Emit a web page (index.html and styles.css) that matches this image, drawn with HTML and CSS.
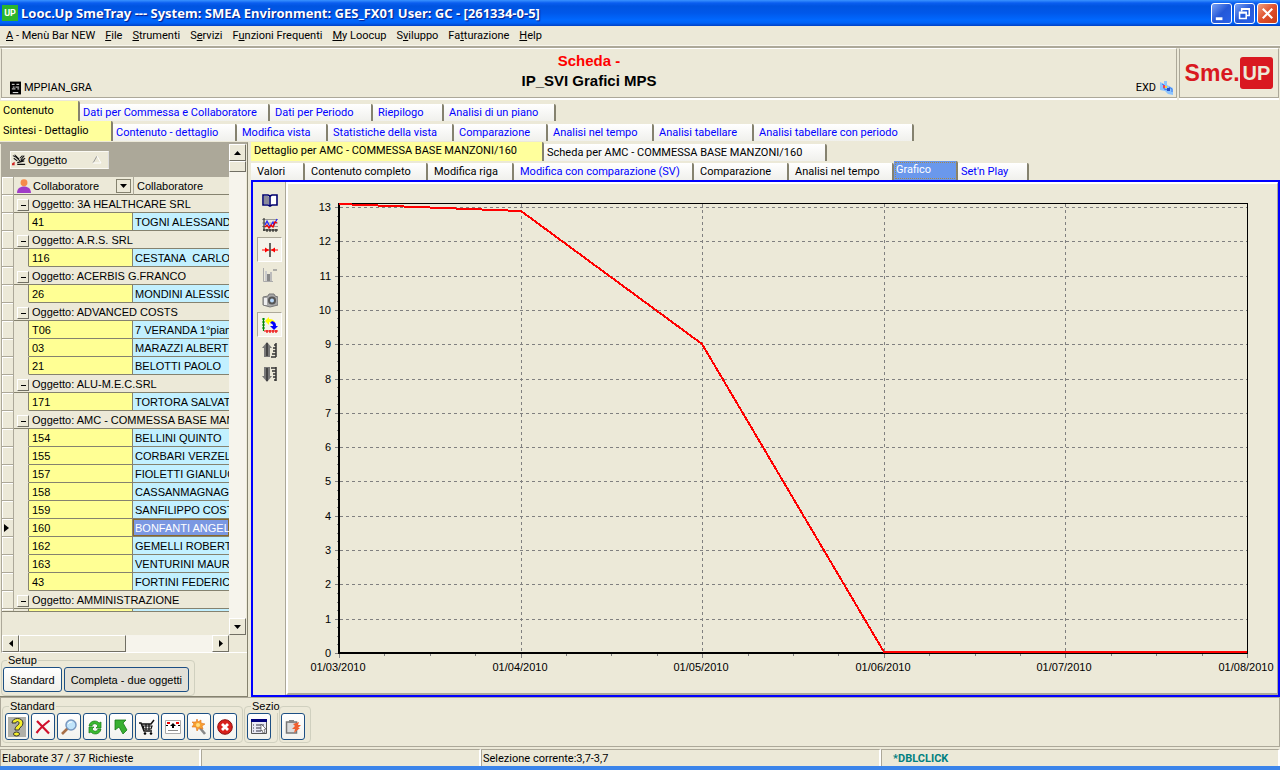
FILE: index.html
```html
<!DOCTYPE html>
<html lang="it">
<head>
<meta charset="utf-8">
<title>Looc.Up SmeTray</title>
<link rel="stylesheet" href="styles.css">
</head>
<body>
<div class="app">
  <header class="titlebar">
    <span class="app-icon">UP</span>
    <h1 class="title">Looc.Up SmeTray --- System: SMEA Environment: GES_FX01 User: GC - [261334-0-5]</h1>
    <div class="window-buttons">
      <button class="win" aria-label="Riduci a icona"><svg viewBox="0 0 20 20"><path d="M4 14h7v3H4z" fill="#fff"/></svg></button>
      <button class="win" aria-label="Ripristina"><svg viewBox="0 0 20 20"><path d="M7 8V5h8v7h-3M7 5.5h8" fill="none" stroke="#fff" stroke-width="1.6"/><path d="M4.8 8.8h7v6.4h-7zM4.8 9.5h7" fill="none" stroke="#fff" stroke-width="1.6"/></svg></button>
      <button class="win win-close" aria-label="Chiudi"><svg viewBox="0 0 20 20"><path d="M5 5l10 10M15 5L5 15" stroke="#fff" stroke-width="2.2"/></svg></button>
    </div>
  </header>

  <nav class="menubar" aria-label="Menù">
    <button><u>A</u> - Menù Bar NEW</button>
    <button><u>F</u>ile</button>
    <button><u>S</u>trumenti</button>
    <button>S<u>e</u>rvizi</button>
    <button>F<u>u</u>nzioni Frequenti</button>
    <button><u>M</u>y Loocup</button>
    <button>S<u>v</u>iluppo</button>
    <button>Fa<u>t</u>turazione</button>
    <button><u>H</u>elp</button>
  </nav>

  <section class="banner">
    <div class="banner-main">
      <div class="program"><svg class="ico12" viewBox="0 0 12 14"><path d="M0 0h12v14H0z"/><path d="M2 3h3M7 3h3M3 6h2M6 6h4M2 8h4M8 8h2M3 12h6" stroke="#fff"/></svg>MPPIAN_GRA</div>
      <div class="banner-title"><p class="kind">Scheda -</p><p>IP_SVI Grafici MPS</p></div>
      <div class="mode">EXD
        <svg class="ico14" viewBox="0 0 14 14"><path d="M0 1l4 2V0h3v4l6 3v7l-5-1-3-3-5-1z" fill="#8cc4ff"/><path d="M2 3l2 1v4l4 1M9 6l3 2v3" stroke="#3a78e8" fill="none"/><path d="M3 4h2v3H3z" fill="#e84060"/><path d="M5 5h2v2H5z" fill="#fc3"/><path d="M7 7h3v3H7z" fill="#2450c8"/></svg>
      </div>
    </div>
    <div class="banner-logo"><div class="logo"><span>Sme.</span><span class="logo-up">UP</span></div></div>
  </section>

  <div class="tabs tabs-one" role="tablist">
    <button role="tab" aria-selected="true" class="tab current">Contenuto</button>
    <button role="tab" class="tab">Dati per Commessa e Collaboratore</button>
    <button role="tab" class="tab">Dati per Periodo</button>
    <button role="tab" class="tab">Riepilogo</button>
    <button role="tab" class="tab">Analisi di un piano</button>
  </div>
  <div class="tabs tabs-two" role="tablist">
    <button role="tab" aria-selected="true" class="tab current">Sintesi - Dettaglio</button>
    <button role="tab" class="tab">Contenuto - dettaglio</button>
    <button role="tab" class="tab">Modifica vista</button>
    <button role="tab" class="tab">Statistiche della vista</button>
    <button role="tab" class="tab">Comparazione</button>
    <button role="tab" class="tab">Analisi nel tempo</button>
    <button role="tab" class="tab">Analisi tabellare</button>
    <button role="tab" class="tab">Analisi tabellare con periodo</button>
  </div>

  <main class="work">
    <aside class="side">
      <div class="browser">
        <div class="listing">
          <div class="groupbox">
            <button class="group-by">
              <svg class="ico14" viewBox="0 0 16 14"><path d="M1 2l4 2 4 4M2 5l4 3M3 1l5 5M9 5l3-3M10 7l4-5M6 10l8-2M6 12h9M9 9l6-4" stroke="#111" fill="none" stroke-width="1.2"/><path d="M0 11l3-2v4H0z" fill="#c22"/></svg>
              <span>Oggetto</span>
              <svg class="sort" viewBox="0 0 10 10"><path d="M1 8l4-7" stroke="#999"/><path d="M5 1l4 7H1" stroke="#fff" fill="none"/></svg>
            </button>
          </div>
          <table class="grid">
            <colgroup><col class="c-mark"><col class="c-indent"><col class="c-code"><col class="c-name"></colgroup>
            <thead>
              <tr>
                <th class="mark"></th>
                <th class="head-code" colspan="2"><div class="head"><svg class="ico14" viewBox="0 0 13 13"><circle cx="6.5" cy="3.5" r="3.2" fill="#f58a4a"/><path d="M0 13c0-5 4-6 6.500-6s6.500 1 6.500 6z" fill="#a03cc8"/></svg><span>Collaboratore</span><button class="drop" aria-label="Filtra"><svg viewBox="0 0 7 4"><path d="M0 0h7L3.500 4z"/></svg></button></div></th>
                <th class="head-name">Collaboratore</th>
              </tr>
            </thead>
            <tbody>
              <tr class="group"><td class="mark"></td><td colspan="3"><button class="fold" aria-label="Comprimi"></button>Oggetto: 3A HEALTHCARE SRL</td></tr>
              <tr><td class="mark"></td><td class="indent"></td><td class="code">41</td><td class="name">TOGNI ALESSAND</td></tr>
              <tr class="group"><td class="mark"></td><td colspan="3"><button class="fold" aria-label="Comprimi"></button>Oggetto: A.R.S. SRL</td></tr>
              <tr><td class="mark"></td><td class="indent"></td><td class="code">116</td><td class="name">CESTANA&nbsp; CARLO</td></tr>
              <tr class="group"><td class="mark"></td><td colspan="3"><button class="fold" aria-label="Comprimi"></button>Oggetto: ACERBIS G.FRANCO</td></tr>
              <tr><td class="mark"></td><td class="indent"></td><td class="code">26</td><td class="name">MONDINI ALESSIO</td></tr>
              <tr class="group"><td class="mark"></td><td colspan="3"><button class="fold" aria-label="Comprimi"></button>Oggetto: ADVANCED COSTS</td></tr>
              <tr><td class="mark"></td><td class="indent"></td><td class="code">T06</td><td class="name">7 VERANDA 1°pian</td></tr>
              <tr><td class="mark"></td><td class="indent"></td><td class="code">03</td><td class="name">MARAZZI ALBERT</td></tr>
              <tr><td class="mark"></td><td class="indent"></td><td class="code">21</td><td class="name">BELOTTI PAOLO</td></tr>
              <tr class="group"><td class="mark"></td><td colspan="3"><button class="fold" aria-label="Comprimi"></button>Oggetto: ALU-M.E.C.SRL</td></tr>
              <tr><td class="mark"></td><td class="indent"></td><td class="code">171</td><td class="name">TORTORA SALVAT</td></tr>
              <tr class="group"><td class="mark"></td><td colspan="3"><button class="fold" aria-label="Comprimi"></button>Oggetto: AMC - COMMESSA BASE MANZ</td></tr>
              <tr><td class="mark"></td><td class="indent"></td><td class="code">154</td><td class="name">BELLINI QUINTO</td></tr>
              <tr><td class="mark"></td><td class="indent"></td><td class="code">155</td><td class="name">CORBARI VERZEL</td></tr>
              <tr><td class="mark"></td><td class="indent"></td><td class="code">157</td><td class="name">FIOLETTI GIANLUC</td></tr>
              <tr><td class="mark"></td><td class="indent"></td><td class="code">158</td><td class="name">CASSANMAGNAG</td></tr>
              <tr><td class="mark"></td><td class="indent"></td><td class="code">159</td><td class="name">SANFILIPPO COST</td></tr>
              <tr><td class="mark"><svg class="pointer" viewBox="0 0 5 8"><path d="M0 0l5 4-5 4z"/></svg></td><td class="indent"></td><td class="code">160</td><td class="name picked">BONFANTI ANGEL</td></tr>
              <tr><td class="mark"></td><td class="indent"></td><td class="code">162</td><td class="name">GEMELLI ROBERT</td></tr>
              <tr><td class="mark"></td><td class="indent"></td><td class="code">163</td><td class="name">VENTURINI MAUR</td></tr>
              <tr><td class="mark"></td><td class="indent"></td><td class="code">43</td><td class="name">FORTINI FEDERIC</td></tr>
              <tr class="group"><td class="mark"></td><td colspan="3"><button class="fold" aria-label="Comprimi"></button>Oggetto: AMMINISTRAZIONE</td></tr>
              <tr class="sliver"><td class="mark"></td><td class="indent"></td><td class="code"></td><td class="name"></td></tr>
            </tbody>
          </table>
          <div class="grid-foot"></div>
        </div>
        <div class="vscroll">
          <button class="arrow" aria-label="Su"><svg viewBox="0 0 7 4"><path d="M0 4h7L3.500 0z"/></svg></button>
          <div class="vthumb"></div>
          <button class="arrow arrow-end" aria-label="Giù"><svg viewBox="0 0 7 4"><path d="M0 0h7L3.500 4z"/></svg></button>
        </div>
        <div class="hscroll">
          <button class="arrow" aria-label="Sinistra"><svg class="turned" viewBox="0 0 4 7"><path d="M4 0v7L0 3.500z"/></svg></button>
          <div class="hthumb"></div>
          <button class="arrow arrow-right" aria-label="Destra"><svg class="turned" viewBox="0 0 4 7"><path d="M0 0v7l4-3.500z"/></svg></button>
        </div>
      </div>
      <fieldset class="setup"><legend>Setup</legend><button class="push">Standard</button><button class="push pressed">Completa - due oggetti</button></fieldset>
    </aside>

    <section class="detail">
      <div class="tabs tabs-three" role="tablist">
        <button role="tab" aria-selected="true" class="tab current">Dettaglio per AMC - COMMESSA BASE MANZONI/160</button>
        <button role="tab" class="tab plain">Scheda per AMC - COMMESSA BASE MANZONI/160</button>
      </div>
      <div class="tabs tabs-four" role="tablist">
        <button role="tab" class="tab plain">Valori</button>
        <button role="tab" class="tab plain">Contenuto completo</button>
        <button role="tab" class="tab plain">Modifica riga</button>
        <button role="tab" class="tab">Modifica con comparazione (SV)</button>
        <button role="tab" class="tab plain">Comparazione</button>
        <button role="tab" class="tab plain">Analisi nel tempo</button>
        <button role="tab" aria-selected="true" class="tab focused">Grafico</button>
        <button role="tab" class="tab">Set'n Play</button>
      </div>
      <div class="frame">
        <div class="tools">
          <button class="tool" aria-label="Legenda"><svg viewBox="0 0 16 14"><path d="M1 2h5l2 1 2-1h5v10h-5l-2 1-2-1H1z" fill="#fff" stroke="#00006e" stroke-width="1.600"/><path d="M2 3h4l1 1v7H2z" fill="#8a8a9a"/><path d="M8 3v10" stroke="#00006e" stroke-width="1.600"/></svg></button>
          <button class="tool" aria-label="Serie"><svg viewBox="0 0 16 14"><path d="M0 1.500h16M0 5h16M0 8.500h16" stroke="#888" stroke-width=".8"/><path d="M2 0v13M1 12h15M5 11v3M8 11v3M11 11v3M14 11v3" stroke="#111" stroke-width="1" fill="none"/><path d="M3 7l2-4 3 6 3-5 1 3 3-6" stroke="#22f" fill="none" stroke-width="1.200"/><path d="M3 9l2-2 2 3 2-3 2 2 2-5 2 1" stroke="#e00" fill="none" stroke-width="1.300"/></svg></button>
          <button class="tool down" aria-label="Cursore"><svg viewBox="0 0 16 14"><path d="M8 0v14" stroke="#000" stroke-width="1.200"/><path d="M0 7h7M9 7h7" stroke="#f00" stroke-width="1.200"/><path d="M3 4.500l4 2.500-4 2.500zM13 4.500L9 7l4 2.500z" fill="#f00"/></svg></button>
          <button class="tool" aria-label="Barre"><svg viewBox="0 0 16 14"><path d="M1.500 0v13.500H11" stroke="#aaa" fill="none"/><path d="M3 3h2v10H3z" fill="#ccc"/><path d="M5 6h3v7H5z" fill="#888"/><path d="M8 4h2v9H8z" fill="#bbb"/><path d="M11 2h4" stroke="#999" stroke-width="1.500"/></svg></button>
          <button class="tool" aria-label="Foto"><svg viewBox="0 0 16 14"><path d="M1 4l5-1 1-2h5l1 2 3 1v8l-8 2-7-2z" fill="#a8a8a8" stroke="#777"/><path d="M2 5h3v7H2z" fill="#eee"/><circle cx="10" cy="7.500" r="4" fill="#555"/><circle cx="10" cy="7.500" r="2" fill="#b8d8f8"/></svg></button>
          <button class="tool down" aria-label="Ruota assi"><svg viewBox="0 0 16 16"><path d="M1.500 1v13M0 2h3M0 5h3M0 8h3M0 11h3" stroke="#080" stroke-width="1.200" fill="none"/><path d="M2 14h14M5 13v3M8 13v3M11 13v3M14 13v3" stroke="#e00" stroke-width="1.200"/><path d="M3 4l4-4v2c3 0 5 1 6 3l-3 2C9 6 8 5 7 5v3z" fill="#ff0"/><path d="M10 4c3 1 4 2 4 5h2l-4 4-4-4h3c0-2-1-2-3-3z" fill="#00f"/></svg></button>
          <button class="tool" aria-label="Su"><svg viewBox="0 0 16 16"><path d="M5 0l5 6H8v9H2V6H0z" fill="#777"/><path d="M5 1v13" stroke="#444" stroke-width="2"/><path d="M12 3h2M11 6h3M11 9h3M10 12h4M9 15h5M14 1v14" stroke="#333" stroke-width="1.500"/></svg></button>
          <button class="tool" aria-label="Giù"><svg viewBox="0 0 16 16"><path d="M5 15l5-6H8V0H2v9H0z" fill="#777"/><path d="M5 1v13" stroke="#444" stroke-width="2"/><path d="M9 1h5M10 4h4M11 7h3M11 10h3M12 13h2M14 0v14" stroke="#333" stroke-width="1.500"/></svg></button>
        </div>
        <div class="plot">
          <svg class="chart" id="chart" viewBox="288 184 989 509" role="img" aria-label="Grafico"></svg>
        </div>
      </div>
    </section>
  </main>

  <section class="actions">
    <fieldset class="actions-standard"><legend>Standard</legend>
      <button class="act act-grey" aria-label="Aiuto"><svg viewBox="0 0 18 20"><path d="M0 0h18v20H0z" fill="#b0b0a8"/><path d="M4 6c0-6 11-6 11 0 0 4-4 4-4 7H7c0-5 4-4 4-7 0-2-3-2-3 0z" fill="#f4ee2a" stroke="#333"/><ellipse cx="8.500" cy="17" rx="3" ry="2" fill="#f4ee2a" stroke="#333"/></svg></button>
      <button class="act" aria-label="Annulla"><svg viewBox="0 0 16 16"><path d="M2 2l12 12.500M14.500 1.500C10 5 5 9 1.500 14" stroke="#d0102c" stroke-width="2.200" fill="none"/></svg></button>
      <button class="act" aria-label="Cerca"><svg viewBox="0 0 16 16"><path d="M7 9l-6 6" stroke="#a87048" stroke-width="2.600"/><circle cx="10" cy="6" r="5" fill="#c0e4fa" stroke="#7898c0" stroke-width="1.500"/><path d="M7 5c1-2 3-2 4-2" stroke="#fff" fill="none"/></svg></button>
      <button class="act" aria-label="Aggiorna"><svg viewBox="0 0 16 16"><path d="M2 7c1-6 8-6 10-3l2-1v6H9l2-2C9 4 6 4 5 7z" fill="#3aba30" stroke="#187818" stroke-width=".7"/><path d="M14 10c-1 6-8 6-10 3l-2 1V8h5l-2 2c2 3 5 3 6 0z" fill="#3aba30" stroke="#187818" stroke-width=".7"/></svg></button>
      <button class="act" aria-label="Indietro"><svg viewBox="0 0 16 16"><path d="M2 1h11l-3 3 4 7-4 4-4-7-4 3z" fill="#38b030" stroke="#187818" stroke-width=".8"/></svg></button>
      <button class="act" aria-label="Carrello"><svg viewBox="0 0 16 16"><path d="M0 4h2l3 8h8M3 5h9l3-4" stroke="#111" stroke-width="1.500" fill="none"/><path d="M4 7h9l-1 3H5zM7 5v6M10 5v6" stroke="#111" fill="none" stroke-width="1.200"/><circle cx="6" cy="14.500" r="1.300"/><circle cx="12" cy="14.500" r="1.300"/></svg></button>
      <button class="act" aria-label="Scheda"><svg viewBox="0 0 16 16"><path d="M.5 1.500h15v13H.5z" fill="#fff" stroke="#aaa"/><path d="M2 3h3v2H2zM11 3h3v2h-3z" fill="#e00"/><path d="M8 4l3 3H9v2H7V7H5zM1 6h2v1H1zM13 6h2v1h-2z"/><path d="M3 11.500h10" stroke="#888"/></svg></button>
      <button class="act" aria-label="Trova"><svg viewBox="0 0 16 16"><path d="M9 9l5 6" stroke="#888" stroke-width="2.600"/><path d="M6 0l1 3 3-2v3l4 1-3 2 1 3-4-1-2 3-1-4H1l2-3-2-2h4z" fill="#f8a030" stroke="#e07018" stroke-width=".6"/><circle cx="7" cy="6" r="2" fill="#ffe080"/></svg></button>
      <button class="act" aria-label="Esci"><svg viewBox="0 0 16 16"><circle cx="8" cy="8" r="7.300" fill="#d8201c" stroke="#8c1010"/><path d="M5 5l6 6M11 5l-6 6" stroke="#fff" stroke-width="2.800"/></svg></button>
    </fieldset>
    <fieldset class="actions-section"><legend>Sezio</legend>
      <button class="act" aria-label="Elenco"><svg viewBox="0 0 16 16"><path d="M.5 1.500h15v13H.5z" fill="#e8e8f4" stroke="#555"/><path d="M0 0h16v3H0z" fill="#00007c"/><path d="M2 6h1M5 6h8M2 9h1M5 9h5M2 12h1M5 12h5" stroke="#334"/><path d="M10 5l5 5-2 .5 1 3-2 .5-1-3-1 1z" fill="#fff" stroke="#555" stroke-width=".7"/></svg></button>
    </fieldset>
    <fieldset class="actions-last">
      <button class="act" aria-label="Esegui"><svg viewBox="0 0 16 16"><path d="M1.500 3h10v11h-10z" fill="#ddd" stroke="#777" stroke-width="1.500"/><path d="M4 1h5v3H4z" fill="#888"/><path d="M8 5l6-2-1 3h3l-3 3h2l-6 5 1-4H7l3-3z" fill="#f06030"/></svg></button>
    </fieldset>
  </section>

  <footer class="status">
    <span>Elaborate 37 / 37 Richieste</span>
    <span></span>
    <span>Selezione corrente:3,7-3,7</span>
    <span class="event">*DBLCLICK</span>
  </footer>
</div>
<script src="chart.js"></script>
</body>
</html>
```
FILE: chart.js
```js
const NS = 'http://www.w3.org/2000/svg';
const chart = document.getElementById('chart');

function add(tag, attrs, text) {
  const node = document.createElementNS(NS, tag);
  Object.entries(attrs).forEach(([key, value]) => node.setAttribute(key, value));
  if (text !== undefined) node.textContent = text;
  chart.appendChild(node);
}

const left = 339, right = 1247, top_ = 203, bottom = 653;
const dates = ['01/03/2010', '01/04/2010', '01/05/2010', '01/06/2010', '01/07/2010', '01/08/2010'];
const values = [13.1, 12.88, 9, 0, 0, 0];
const xOf = i => Math.round(left + (right - left) * i / (dates.length - 1));
const yOf = v => Math.round(bottom - v * 34.31);
const line = (cls, x1, y1, x2, y2) => add('path', { class: cls, d: `M${x1} ${y1}L${x2} ${y2}` });

for (let v = 0; v <= 13; v++) {
  const y = yOf(v) + 0.5;
  if (v > 0) line('rule', left + 1, y, right, y);
  line('tick', left - 4, y, left, y);
  for (let m = 1; m < 4 && v < 13; m++) {
    const my = yOf(v + m / 4) + 0.5;
    line('tick', left - 2, my, left, my);
  }
  add('text', { class: 'value', x: 331, y: yOf(v) + 4 }, v);
}

dates.forEach((date, i) => {
  const x = xOf(i) + 0.5;
  if (i > 0 && i < dates.length - 1) line('rule', x, top_ + 1, x, bottom);
  line('tick', x, bottom + 1, x, bottom + 5);
  for (let m = 1; m < 4 && i < dates.length - 1; m++) {
    const mx = xOf(i + m / 4) + 0.5;
    line('tick', mx, bottom + 1, mx, bottom + 3);
  }
  add('text', { class: 'date', x: xOf(i) - 1, y: 671 }, date);
});

line('border', left, top_ + 0.5, right + 1, top_ + 0.5);
line('border', right + 0.5, top_, right + 0.5, bottom + 1);
line('axis', left, top_, left, bottom + 1);
line('axis', left - 1, bottom, right + 1, bottom);
add('polyline', { class: 'series', points: values.map((v, i) => `${xOf(i)},${v ? yOf(v) : bottom - 1}`).join(' ') });
```
FILE: styles.css
```css
* { box-sizing: border-box; }
body { margin: 0; background: #ece9d8; color: #000; font: 11px/14px Roboto, "DejaVu Sans", sans-serif; }
button { font: inherit; color: inherit; background: none; border: 0; padding: 0; margin: 0; }
.app { display: flex; flex-direction: column; min-height: 100vh; border-bottom: 4px solid #3a84ea; }

.titlebar { display: flex; align-items: center; gap: 3px; height: 26px; padding: 0 2px; background: linear-gradient(#3a93ff 0, #0a5ef0 3px, #0054e0 6px, #0058ea 13px, #0068ff 20px, #0062f6 23px, #0040c4 26px); }
.app-icon { display: flex; align-items: center; justify-content: center; width: 16px; height: 16px; background: #2cb52c; color: #fff; font: bold 9px/16px Roboto, sans-serif; }
.title { flex: 1; margin: 0; color: #fff; font: bold 13px/20px "Noto Sans", sans-serif; text-shadow: 1px 1px 1px #0a1883; }
.window-buttons { display: flex; gap: 2px; }
.win { width: 21px; height: 21px; border: 1px solid #fff; border-radius: 3px; background: linear-gradient(135deg, #7aa2f4, #2458d8 50%, #2a62e8); }
.win svg { display: block; }
.win-close { background: linear-gradient(135deg, #f0a080, #e0502c 50%, #c83c18); }

.menubar { display: flex; gap: 10px; height: 20px; padding: 0 6px; align-items: center; border-bottom: 1px solid #f8f6ee; }

.banner { display: grid; grid-template-columns: 1fr 100px; gap: 2px; padding: 0 1px; border-top: 2px solid #aca899; }
.banner-main, .banner-logo { height: 50px; border: 1px solid #aca899; border-top-color: #fff; box-shadow: 0 2px #fff; }
.banner-main { display: grid; grid-template-columns: 1fr auto 1fr; align-items: end; }
.program { display: flex; align-items: center; gap: 3px; padding: 0 0 2px 8px; }
.ico12 { width: 11px; height: 14px; }
.ico14 { width: 14px; height: 14px; flex: none; }
.banner-title { align-self: start; padding-top: 2px; text-align: center; font: bold 15px/20px "Liberation Sans", Arial, sans-serif; }
.banner-title p { margin: 0; }
.kind { color: #f00; }
.mode { display: flex; justify-content: end; gap: 4px; padding: 0 2px 2px 0; }
.banner-logo { display: flex; align-items: center; justify-content: center; }
.logo { display: flex; align-items: center; color: #d91820; font: bold 23px/32px "Liberation Sans", Arial, sans-serif; }
.logo-up { padding: 0 3px; border-radius: 3px; background: #d91820; color: #ece9d8; font-size: 20px; }

.tabs { display: grid; height: 20px; align-items: end; }
.tabs-one { margin-top: 3px; grid-template-columns: 80px 190px 103px 71px 112px; }
.tabs-two { grid-template-columns: 113px 124px 91px 126px 94px 106px 100px 160px; }
.tabs-three { grid-template-columns: 293px 283px; }
.tabs-four { grid-template-columns: 54px 123px 86px 180px 95px 105px 64px 71px; }
.tab { height: 17px; padding: 1px 0 0 5px; overflow: hidden; white-space: nowrap; text-align: left; color: #00f; background: linear-gradient(#fff, #f0f0ec); border-right: 2px solid #85826f; border-top-right-radius: 2px; }
.tab.plain { color: #000; }
.tab.current { height: 20px; padding: 0 0 1px 3px; color: #000; background: #ffff9c; }
.tab.current + .tab { padding-left: 3px; }
.tab.focused { height: 19px; padding: 0 0 1px 1px; color: #fff; background: #6a98ec; outline: 1px dotted #a08850; outline-offset: -2px; }
.tabs-four .tab { padding-left: 6px; }
.tabs-four .tab.focused { padding-left: 2px; }
.tabs-four .tab.focused + .tab { padding-left: 3px; }

.work { flex: 1; display: grid; grid-template-columns: 248px 1fr; gap: 3px; margin-top: 1px; }
.side { display: flex; flex-direction: column; border-top: 2px solid #aca899; border-right: 1px solid #85826f; border-bottom: 1px solid #85826f; padding-left: 1px; font: 11px/14px "Liberation Sans", Arial, sans-serif; }
.browser { flex: 1; display: grid; grid-template: 1fr 17px / 1fr 17px; padding-right: 1px; border-left: 1px solid #aca899; border-bottom: 1px solid #fff; }
.listing { min-width: 0; overflow: hidden; }
.groupbox { height: 33px; padding: 7px 8px; background: #aca899; }
.group-by { display: flex; align-items: center; gap: 2px; width: 99px; height: 18px; padding: 0 6px 0 1px; background: #ece9d8; border: 1px solid #fbfaf4; border-right-color: #ddd; }
.group-by span { flex: 1; text-align: left; }
.sort { width: 10px; height: 10px; }

.grid { width: 100%; table-layout: fixed; border-collapse: separate; border-spacing: 0; }
.c-mark { width: 12px; }
.c-indent { width: 15px; }
.c-code { width: 104px; }
.grid th, .grid td { height: 18px; padding: 0 0 0 3px; overflow: hidden; white-space: nowrap; text-align: left; font-weight: normal; border-bottom: 1px solid #85826f; }
.grid .mark { padding: 0 0 0 2px; border-right: 1px solid #aca899; border-bottom: 1px solid #aca899; background: #ece9d8; box-shadow: inset 1px 1px #fff; }
.pointer { display: block; width: 5px; height: 8px; }
.grid .indent { border-bottom-color: #ece9d8; border-right: 1px solid #85826f; }
.grid .code { background: #ffff94; border-right: 1px solid #85826f; }
.grid .name { background: #c2f0ff; padding-left: 2px; }
.grid .picked { background: #7b98e2; color: #fff; box-shadow: inset 0 0 0 1px #8a6a28; }
.grid .group td:last-child { padding: 1px 0 0 3px; }
.grid .sliver td { height: 2px; border-bottom: 0; }
.head { display: flex; align-items: center; gap: 2px; padding-top: 1px; }
.head span { flex: 1; }
.drop { display: flex; align-items: center; justify-content: center; width: 15px; height: 14px; margin-right: 2px; border: 1px solid #85826f; }
.drop svg { width: 7px; height: 4px; }
.grid .head-name { padding-top: 1px; border-left: 1px solid #aca899; }
.fold { display: inline-flex; align-items: center; justify-content: center; width: 12px; height: 12px; margin-right: 3px; vertical-align: middle; border: 1px solid #fff; border-right-color: #716f64; border-bottom-color: #716f64; }
.fold::before { content: ""; width: 5px; height: 1px; background: #000; }
.grid-foot { height: 22px; border-top: 1px solid #85826f; }

.vscroll { display: flex; flex-direction: column; background: #f6f4ec; }
.hscroll { display: flex; background: #f6f4ec; }
.arrow, .vthumb, .hthumb { background: #ece9d8; border: 1px solid #fff; border-right-color: #716f64; border-bottom-color: #716f64; }
.arrow { display: flex; align-items: center; justify-content: center; flex: none; width: 17px; height: 17px; }
.arrow svg { width: 7px; height: 4px; }
.arrow .turned { width: 4px; height: 7px; }
.arrow-end { margin-top: auto; }
.arrow-right { margin-left: auto; }
.vthumb { height: 11px; }
.hthumb { width: 107px; }

fieldset { min-width: 0; margin: 0; padding: 0; border: 1px solid #d0d0bf; border-radius: 4px; }
legend { padding: 0 1px; margin-left: 4px; line-height: 14px; }
.setup { display: flex; align-self: start; gap: 2px; padding: 0 5px 3px 1px; }
.push { height: 25px; padding: 0 6px; border: 1px solid #1c4f84; border-radius: 3px; background: linear-gradient(#fff, #f0f0ea); }
.push.pressed { background: #e2e0d8; }

.detail { display: flex; flex-direction: column; min-width: 0; }
.detail .tabs { height: 19px; }
.detail .tab.current { height: 19px; }
.frame { flex: 1; display: grid; grid-template-columns: 33px 1fr; border: 2px solid #00f; }
.tools { display: flex; flex-direction: column; padding: 5px 4px; border-right: 1px solid #aca899; }
.tool { display: flex; align-items: center; justify-content: center; width: 25px; height: 25px; border: 1px solid transparent; }
.tool svg { width: 16px; height: 16px; }
.tool.down { background: #f5f3ea; border: 1px solid #fff; border-top-color: #aca899; border-left-color: #aca899; }
.plot { min-width: 0; border: 2px solid #aca899; border-top-color: #fff; border-left-color: #fff; border-right-width: 1px; }
.chart { display: block; width: 100%; height: auto; }
.chart path, .chart polyline { fill: none; shape-rendering: crispEdges; }
.rule { stroke: #808080; stroke-dasharray: 3 3; }
.tick { stroke: #808080; }
.border { stroke: #000; }
.axis { stroke: #000; stroke-width: 2px; }
.series { stroke: #f00; stroke-width: 2px; }
.value, .date { font: 11px "Liberation Sans", Arial, sans-serif; text-anchor: end; }
.date { text-anchor: middle; }

.actions { display: flex; gap: 1px; height: 50px; padding: 1px 1px 3px; border: 1px solid #aca899; font: 11px/14px "Liberation Sans", Arial, sans-serif; }
.actions fieldset { display: flex; padding: 0 5px 0 2px; gap: 2px; }
.actions .actions-section { width: 34px; padding: 0 0 0 2px; }
.actions-section legend { white-space: nowrap; }
.act { display: flex; align-items: center; justify-content: center; flex: none; width: 24px; height: 27px; border: 1px solid #1c4f84; border-radius: 3px; background: linear-gradient(#fff, #f2f2ee); }
.act svg { width: 16px; height: 16px; }
.act-grey svg { width: 18px; height: 20px; }
.actions .actions-last { margin-top: 7px; padding: 6px 5px 0 1px; }

.status { display: grid; grid-template-columns: 201px 280px 400px 1fr; height: 19px; padding-top: 2px; }
.status span { padding: 1px 0 0 1px; border-top: 1px solid #aca899; border-left: 1px solid #aca899; border-right: 2px solid #fff; line-height: 15px; }
.status .event { padding-left: 11px; color: #008080; font-weight: bold; }
```
